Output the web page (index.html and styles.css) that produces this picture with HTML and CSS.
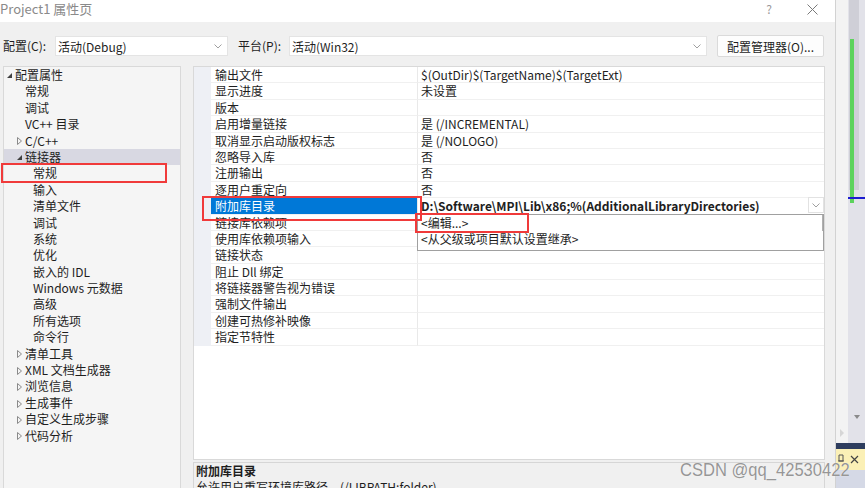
FILE: index.html
```html
<!DOCTYPE html>
<html lang="zh-CN">
<head>
    <meta charset="UTF-8">
    <title>Project1 属性页</title>
    <link rel="stylesheet" href="styles.css">
</head>
<body>
<div class="screen">
    <div class="dialog">
        <div class="titlebar">
            <span class="title">Project1 属性页</span>
            <span class="help">?</span>
            <svg class="close" width="11" height="11" viewBox="0 0 11 11"><path d="M.5.5l10 10M10.5.5l-10 10" stroke="#7a7a7a" stroke-width="1"/></svg>
        </div>

        <div class="toolbar">
            <span class="lbl lbl-config">配置(C):</span>
            <div class="combo combo-config">
                <span>活动(Debug)</span>
                <svg width="8" height="5" viewBox="0 0 8 5"><path d="M.5.5L4 4 7.5.5" fill="none" stroke="#a0a0a0"/></svg>
            </div>
            <span class="lbl lbl-platform">平台(P):</span>
            <div class="combo combo-platform">
                <span>活动(Win32)</span>
                <svg width="8" height="5" viewBox="0 0 8 5"><path d="M.5.5L4 4 7.5.5" fill="none" stroke="#a0a0a0"/></svg>
            </div>
            <button class="btn-manager">配置管理器(O)...</button>
        </div>

        <div class="main">
            <!-- 左侧树 -->
            <div class="tree">
                <div class="node l0"><span class="arrow"><svg width="5" height="5" viewBox="0 0 5 5"><path d="M5 0V5H0Z" fill="#404040"/></svg></span>配置属性</div>
                <div class="node l1"><span class="arrow"></span>常规</div>
                <div class="node l1"><span class="arrow"></span>调试</div>
                <div class="node l1"><span class="arrow"></span>VC++ 目录</div>
                <div class="node l1"><span class="arrow"><svg width="5" height="8" viewBox="0 0 5 8"><path d="M.5.5L4.5 4 .5 7.5Z" fill="none" stroke="#8a8a8a"/></svg></span>C/C++</div>
                <div class="node l1 active"><span class="arrow"><svg width="5" height="5" viewBox="0 0 5 5"><path d="M5 0V5H0Z" fill="#404040"/></svg></span>链接器</div>
                <div class="node l2"><span class="arrow"></span>常规</div>
                <div class="node l2"><span class="arrow"></span>输入</div>
                <div class="node l2"><span class="arrow"></span>清单文件</div>
                <div class="node l2"><span class="arrow"></span>调试</div>
                <div class="node l2"><span class="arrow"></span>系统</div>
                <div class="node l2"><span class="arrow"></span>优化</div>
                <div class="node l2"><span class="arrow"></span>嵌入的 IDL</div>
                <div class="node l2"><span class="arrow"></span>Windows 元数据</div>
                <div class="node l2"><span class="arrow"></span>高级</div>
                <div class="node l2"><span class="arrow"></span>所有选项</div>
                <div class="node l2"><span class="arrow"></span>命令行</div>
                <div class="node l1"><span class="arrow"><svg width="5" height="8" viewBox="0 0 5 8"><path d="M.5.5L4.5 4 .5 7.5Z" fill="none" stroke="#8a8a8a"/></svg></span>清单工具</div>
                <div class="node l1"><span class="arrow"><svg width="5" height="8" viewBox="0 0 5 8"><path d="M.5.5L4.5 4 .5 7.5Z" fill="none" stroke="#8a8a8a"/></svg></span>XML 文档生成器</div>
                <div class="node l1"><span class="arrow"><svg width="5" height="8" viewBox="0 0 5 8"><path d="M.5.5L4.5 4 .5 7.5Z" fill="none" stroke="#8a8a8a"/></svg></span>浏览信息</div>
                <div class="node l1"><span class="arrow"><svg width="5" height="8" viewBox="0 0 5 8"><path d="M.5.5L4.5 4 .5 7.5Z" fill="none" stroke="#8a8a8a"/></svg></span>生成事件</div>
                <div class="node l1"><span class="arrow"><svg width="5" height="8" viewBox="0 0 5 8"><path d="M.5.5L4.5 4 .5 7.5Z" fill="none" stroke="#8a8a8a"/></svg></span>自定义生成步骤</div>
                <div class="node l1"><span class="arrow"><svg width="5" height="8" viewBox="0 0 5 8"><path d="M.5.5L4.5 4 .5 7.5Z" fill="none" stroke="#8a8a8a"/></svg></span>代码分析</div>
            </div>

            <!-- 右侧属性表 -->
            <div class="props">
                <div class="grid">
                    <div class="prow"><span class="gut"></span><span class="name">输出文件</span><span class="val">$(OutDir)$(TargetName)$(TargetExt)</span></div>
                    <div class="prow"><span class="gut"></span><span class="name">显示进度</span><span class="val">未设置</span></div>
                    <div class="prow"><span class="gut"></span><span class="name">版本</span><span class="val"></span></div>
                    <div class="prow"><span class="gut"></span><span class="name">启用增量链接</span><span class="val">是 (/INCREMENTAL)</span></div>
                    <div class="prow"><span class="gut"></span><span class="name">取消显示启动版权标志</span><span class="val">是 (/NOLOGO)</span></div>
                    <div class="prow"><span class="gut"></span><span class="name">忽略导入库</span><span class="val">否</span></div>
                    <div class="prow"><span class="gut"></span><span class="name">注册输出</span><span class="val">否</span></div>
                    <div class="prow"><span class="gut"></span><span class="name">逐用户重定向</span><span class="val">否</span></div>
                    <div class="prow selected">
                        <span class="gut"></span>
                        <span class="name">附加库目录</span>
                        <span class="val">D:\Software\MPI\Lib\x86;%(AdditionalLibraryDirectories)
                            <span class="dd-btn"><svg width="8" height="5" viewBox="0 0 8 5"><path d="M.5.5L4 4 7.5.5" fill="none" stroke="#a0a0a0"/></svg></span>
                            <span class="dd-list">
                                <span class="dd-item">&lt;编辑...&gt;</span>
                                <span class="dd-item">&lt;从父级或项目默认设置继承&gt;</span>
                            </span>
                        </span>
                    </div>
                    <div class="prow"><span class="gut"></span><span class="name">链接库依赖项</span><span class="val"></span></div>
                    <div class="prow"><span class="gut"></span><span class="name">使用库依赖项输入</span><span class="val"></span></div>
                    <div class="prow"><span class="gut"></span><span class="name">链接状态</span><span class="val"></span></div>
                    <div class="prow"><span class="gut"></span><span class="name">阻止 Dll 绑定</span><span class="val"></span></div>
                    <div class="prow"><span class="gut"></span><span class="name">将链接器警告视为错误</span><span class="val"></span></div>
                    <div class="prow"><span class="gut"></span><span class="name">强制文件输出</span><span class="val"></span></div>
                    <div class="prow"><span class="gut"></span><span class="name">创建可热修补映像</span><span class="val"></span></div>
                    <div class="prow"><span class="gut"></span><span class="name">指定节特性</span><span class="val"></span></div>
                </div>
                <div class="desc">
                    <div class="desc-title">附加库目录</div>
                    <div class="desc-text">允许用户重写环境库路径。(/LIBPATH:folder)</div>
                </div>
            </div>
        </div>
    </div>

    <!-- 右侧 VS 背景边 -->
    <svg class="vs-edge" width="29" height="488" viewBox="0 0 29 488">
        <rect x="0" y="0" width="12" height="488" fill="#f3f3f3"/>
        <rect x="12" y="0" width="17" height="443" fill="#e2e2e9"/>
        <rect x="13" y="0" width="10" height="190" fill="#cfcfd7"/>
        <rect x="14" y="39" width="4" height="164" fill="#5cd35c"/>
        <rect x="12" y="197" width="17" height="2" fill="#1c1cd0"/>
        <path d="M18 415h6l-3 4z" fill="#8a8a8a"/>
        <path d="M4 429l4 4-4 4z" fill="#d6d6d6"/>
        <rect x="0" y="443" width="29" height="6" fill="#2e3d5e"/>
        <rect x="0" y="449" width="29" height="21" fill="#fbf0b6"/>
        <path d="M3 455h4v6H3zM2 461h6" fill="none" stroke="#555"/>
        <path d="M15 456l7 7M22 456l-7 7" stroke="#444" stroke-width="1.2"/>
        <rect x="0" y="470" width="29" height="18" fill="#d5d9e6"/>
    </svg>

    <!-- 标注 -->
    <div class="mark mark-tree"></div>
    <div class="mark mark-name"></div>
    <div class="mark mark-edit"></div>
    <div class="watermark">CSDN @qq_42530422</div>
</div>
</body>
</html>
```

FILE: styles.css
```css
* {
    box-sizing: border-box;
}
body {
    margin: 0;
    width: 865px;
    height: 488px;
    overflow: hidden;
    background-color: #f0f0f0;
    font-family: "Noto Sans CJK SC", "Noto Sans", sans-serif;
    font-size: 12px;
    color: #1e1e1e;
}
.screen {
    position: relative;
    display: flex;
    width: 865px;
    height: 488px;
}
.dialog {
    width: 836px;
    height: 488px;
    display: flex;
    flex-direction: column;
    background-color: #f0f0f0;
    border-right: 1px solid #d2d2d2;
}

/* 标题栏 */
.titlebar {
    height: 22px;
    flex: none;
    background-color: #fff;
    display: flex;
    align-items: flex-start;
}
.title {
    flex: 1;
    font-size: 13px;
    line-height: 18px;
    color: #8a8a8a;
}
.help {
    font-size: 12px;
    line-height: 18px;
    color: #9a9a9a;
    margin-right: 35px;
}
.close {
    margin-top: 4px;
    margin-right: 17px;
}

/* 配置行 */
.toolbar {
    height: 44px;
    flex: none;
    display: flex;
    align-items: flex-start;
    padding: 14px 0 0 3px;
}
.lbl {
    line-height: 20px;
}
.lbl-config {
    width: 52px;
}
.lbl-platform {
    margin-left: 10px;
    width: 51px;
}
.combo {
    height: 20px;
    background-color: #fff;
    border: 1px solid #e4e4e4;
    display: flex;
    align-items: center;
    justify-content: space-between;
    padding: 0 5px 0 2px;
}
.combo-config {
    width: 173px;
}
.combo-platform {
    width: 418px;
}
.btn-manager {
    margin-left: 10px;
    margin-top: -1px;
    width: 107px;
    height: 22px;
    padding: 0;
    background-color: #fdfdfd;
    border: 1px solid #dadada;
    border-radius: 2px;
    font-family: inherit;
    font-size: 12px;
    color: #1e1e1e;
}

/* 主区域 */
.main {
    flex: 1;
    min-height: 0;
    display: flex;
    padding-left: 3px;
    overflow: hidden;
}
.tree {
    width: 178px;
    border: 1px solid #d9d9d9;
    border-bottom: none;
    background-color: #f5f5f5;
}
.node {
    height: 16.4px;
    line-height: 16.4px;
    display: flex;
    white-space: nowrap;
}
.node .arrow {
    width: 8px;
    display: flex;
    align-items: center;
    padding-top: 1px;
}
.node.l0 { padding-left: 3px; }
.node.l1 { padding-left: 13px; }
.node.l2 { padding-left: 21px; }
.node.active {
    background-color: #d8d8e2;
}

.props {
    margin-left: 12px;
    width: 632px;
    display: flex;
    flex-direction: column;
}
.grid {
    flex: none;
    height: 394px;
    border: 1px solid #d9d9d9;
    background-color: #fff;
}
.prow {
    display: grid;
    grid-template-columns: 17px 207px 1fr;
    height: 16.4px;
    line-height: 15.4px;
    white-space: nowrap;
}
.prow .gut {
    background-color: #eef0f5;
}
.prow .name {
    padding-left: 4px;
    border-bottom: 1px solid #f0f0f0;
    border-right: 1px solid #e9e9e9;
}
.prow .val {
    position: relative;
    padding-left: 3px;
    border-bottom: 1px solid #f0f0f0;
}
.prow.selected .name {
    background-color: #0078d7;
    color: #fff;
}
.prow.selected .val {
    font-weight: bold;
}
.dd-btn {
    position: absolute;
    right: 0;
    top: -1px;
    width: 16px;
    height: 16px;
    border: 1px solid #e2e2e2;
    background-color: #fff;
    display: flex;
    align-items: center;
    justify-content: center;
}
.dd-list {
    position: absolute;
    left: -1px;
    top: 15.4px;
    width: 407px;
    height: 37px;
    border: 1px solid #a0a0a0;
    background-color: #fff;
    font-weight: normal;
    display: flex;
    flex-direction: column;
    z-index: 2;
}
.dd-list::after {
    content: "";
    position: absolute;
    right: 0;
    top: 0;
    width: 1px;
    height: 16px;
    background-color: #b0b0b0;
}
.dd-item {
    height: 16.4px;
    line-height: 16.4px;
    padding-left: 3px;
}

.desc {
    margin-top: 2px;
    flex: none;
    height: 40px;
    border: 1px solid #d6d6d6;
    border-bottom: none;
    padding: 0 2px;
}
.desc-title {
    font-weight: bold;
    line-height: 16px;
}
.desc-text {
    line-height: 16px;
}

.vs-edge {
    display: block;
    flex: none;
}

/* 红框标注 */
.mark {
    position: absolute;
    border: 2px solid #f03a3a;
    z-index: 5;
}
.mark-tree {
    left: 1px;
    top: 163px;
    width: 166px;
    height: 20px;
}
.mark-name {
    left: 202px;
    top: 196px;
    width: 220px;
    height: 25px;
}
.mark-edit {
    left: 415px;
    top: 213px;
    width: 114px;
    height: 20px;
}
.watermark {
    position: absolute;
    left: 680px;
    top: 459px;
    font-family: "Liberation Sans", sans-serif;
    font-size: 18px;
    line-height: 22px;
    color: #969696;
    text-shadow: 0 0 1px #fff;
    transform: scaleX(0.92);
    transform-origin: left center;
    z-index: 6;
}
```
